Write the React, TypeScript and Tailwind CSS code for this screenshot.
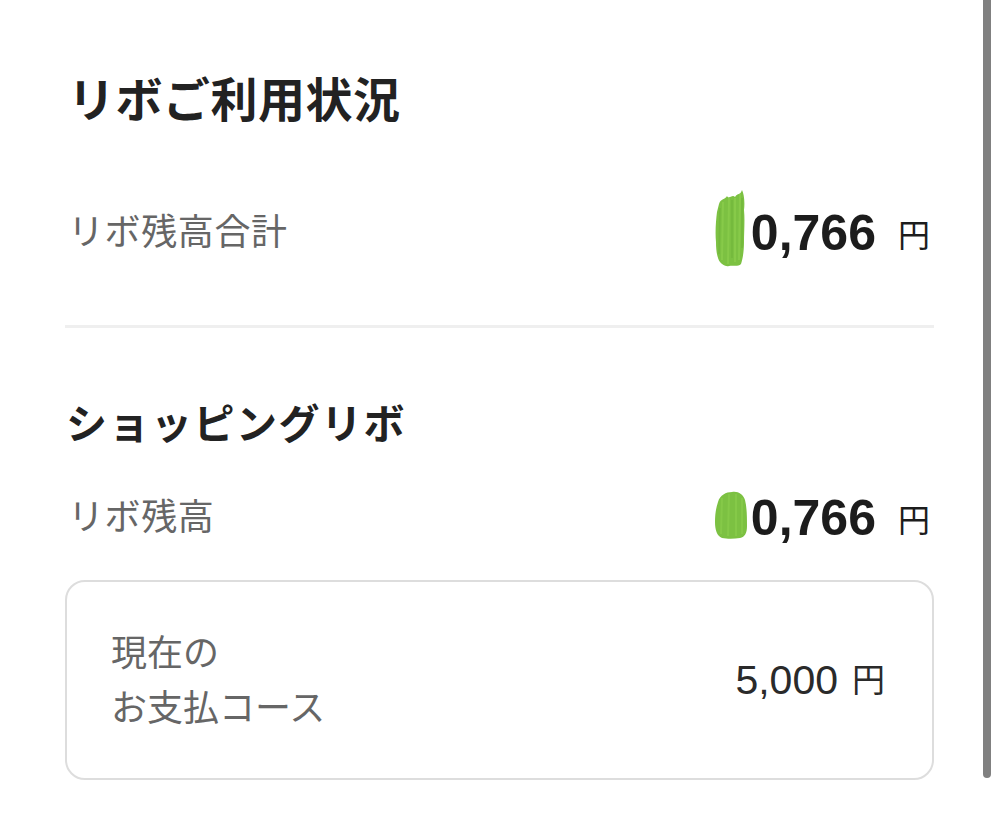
import React from "react";

const font = { fontFamily: '"Liberation Sans", "Noto Sans CJK JP", sans-serif' };

function BlobTall() {
  return (
    <svg width="38" height="80" viewBox="0 0 38 80" className="absolute left-[-40px] top-[-20px]">
      <path
        d="M8 16 C10 10 14 12 16 8 C18 12 21 6 24 9 C27 4 29 8 31 2 C33 6 34 14 33 22 C34 32 33 44 33 54 C33 62 32 70 30 76 C27 79 22 77 18 78 C14 79 11 76 9 74 C6 70 5 62 5 54 C4 44 5 32 6 24 Z"
        fill="#7cc142"
      />
      <path d="M12 14 L11 72 M18 10 L17 76 M24 10 L24 74 M29 6 L28 72" stroke="#8fd14f" strokeWidth="2" opacity="0.6" />
      <path d="M9 20 L8 66 M21 12 L21 70 M31 10 L31 60" stroke="#6fb33a" strokeWidth="1.5" opacity="0.6" />
    </svg>
  );
}

function BlobShort() {
  return (
    <svg width="38" height="50" viewBox="0 0 38 50" className="absolute left-[-39px] top-[-3px]">
      <path
        d="M6 12 C8 5 14 2 20 2 C26 1 31 4 33 10 C35 18 35 28 35 36 C35 43 33 47 28 48 C22 49 15 49 10 48 C5 46 3 40 3 32 C3 24 4 18 6 12 Z"
        fill="#7cc142"
      />
      <path d="M10 8 L9 44 M17 4 L16 46 M24 4 L24 46 M30 8 L30 44" stroke="#8fd14f" strokeWidth="2" opacity="0.5" />
    </svg>
  );
}

function Amount({ tall }: { tall?: boolean }) {
  return (
    <div className="flex items-center text-[#1c1c1c]">
      <span className="relative font-bold text-[50px] leading-none">
        {tall ? <BlobTall /> : <BlobShort />}
        0,766
      </span>
      <span className="ml-[22px] text-[32px] leading-none mt-[6px]">円</span>
    </div>
  );
}

export default function App() {
  return (
    <div className="relative w-[999px] h-[825px] bg-white overflow-hidden" style={font}>
      <div className="px-[65px] flex flex-col">
        <div className="mt-[75px] h-[50px] flex items-center">
          <h1 className="text-[47px] leading-none font-bold text-[#222222] ml-[3px] tracking-[0.5px]">リボご利用状況</h1>
        </div>

        <div className="mt-[68px] h-[80px] flex items-center justify-between pr-[4px]">
          <span className="text-[36px] leading-none text-[#666666] ml-[3px] tracking-[0.6px]">リボ残高合計</span>
          <Amount tall />
        </div>

        <div className="mt-[52px] h-[3px] bg-[#efefef]" />

        <div className="mt-[72px] h-[50px] flex items-center">
          <h2 className="text-[41px] leading-none font-bold text-[#222222] ml-[1px] tracking-[1.5px]">ショッピングリボ</h2>
        </div>

        <div className="mt-[38px] h-[60px] flex items-center justify-between pr-[4px]">
          <span className="text-[36px] leading-none text-[#666666] ml-[3px] tracking-[0.6px]">リボ残高</span>
          <Amount />
        </div>

        <div className="mt-[32px] h-[200px] rounded-[20px] border-2 border-[#dddddd] flex items-center justify-between pl-[44px] pr-[47px]">
          <div className="text-[36px] leading-[55px] text-[#666666] pt-[2px]">
            <div>現在の</div>
            <div>お支払コース</div>
          </div>
          <div className="flex items-center text-[#2a2a2a]">
            <span className="text-[41px] leading-none">5,000</span>
            <span className="ml-[14px] text-[33px] leading-none">円</span>
          </div>
        </div>
      </div>

      <div className="absolute left-[983px] top-0 w-[8px] h-[778px] bg-[#808080] rounded-b-full" />
    </div>
  );
}
